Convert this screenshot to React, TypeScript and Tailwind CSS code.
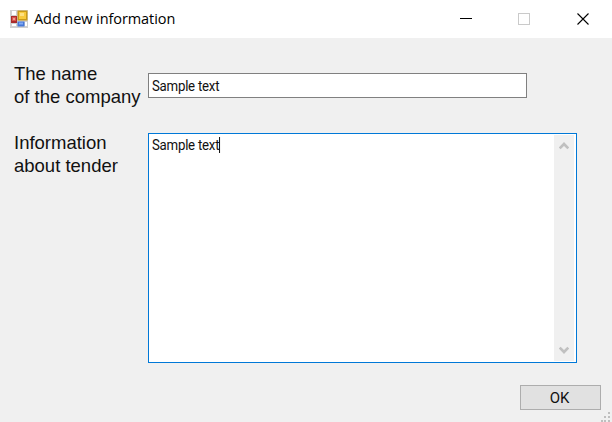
import React from "react";

function FormIcon() {
  return (
    <svg width="18" height="18" viewBox="0 0 18 18" className="block shrink-0">
      <rect width="18" height="18" fill="#d0d0d0" />
      <path d="M2 1h4v4H2zM2 14h4v2H2zM15 12h2v4h-2z" fill="#fff" />
      <rect x="1" y="6" width="6" height="7" fill="#a92b2b" />
      <rect x="2" y="7" width="4" height="4" fill="#d9534a" />
      <rect x="3" y="8" width="2" height="2" fill="#ec9a8e" />
      <rect x="7.5" y="0.5" width="10" height="10" fill="#c99a18" />
      <rect x="9" y="2" width="7" height="7" fill="#f8ca3c" />
      <rect x="10" y="3" width="4" height="3" fill="#fde184" />
      <rect x="7.5" y="11.5" width="7" height="5" fill="#4678d8" />
      <rect x="9" y="12.5" width="4" height="2" fill="#82aaf4" />
    </svg>
  );
}

function Chevron({ down = false }: { down?: boolean }) {
  return (
    <svg width="10" height="9" viewBox="0 0 10 9" className="block">
      <path
        d={down ? "M0.7 1.6L5 6L9.3 1.6" : "M0.7 7.4L5 3L9.3 7.4"}
        fill="none"
        stroke="#c0c0c0"
        strokeWidth="2.7"
      />
    </svg>
  );
}

function TitleBar() {
  return (
    <header className="flex h-[38px] items-center bg-white pl-[10px]">
      <FormIcon />
      <h1 className="ml-[6px] whitespace-nowrap font-['Open_Sans',sans-serif] text-[14.5px] leading-[20px] tracking-[-0.08px] text-black">
        Add new information
      </h1>
      <div className="ml-auto flex items-center pr-[22px]">
        <svg width="131" height="14" viewBox="0 0 131 14" className="block" shapeRendering="crispEdges">
          <rect x="1" y="6" width="12" height="1" fill="#000" />
          <rect x="59.5" y="1.5" width="11" height="11" fill="none" stroke="#cacaca" />
          <path
            d="M118.5 1.5L129.5 12.5M129.5 1.5L118.5 12.5"
            stroke="#000"
            strokeWidth="1.1"
            shapeRendering="auto"
          />
        </svg>
      </div>
    </header>
  );
}

function Label({ lines }: { lines: string[] }) {
  return (
    <div className="w-[134px] shrink-0 whitespace-nowrap text-[18.5px] leading-[23px] text-[#111]">
      {lines.map((line) => (
        <div key={line}>{line}</div>
      ))}
    </div>
  );
}

function FieldText({ caret = false }: { caret?: boolean }) {
  return (
    <span className="flex origin-left scale-x-[0.945] whitespace-nowrap font-['Roboto',sans-serif] text-[14px] leading-[17px] tracking-[-0.25px] text-[#111]">
      Sample text
      {caret && <span className="h-[16px] w-px bg-black" />}
    </span>
  );
}

export default function App() {
  return (
    <main className="flex h-[422px] w-[612px] flex-col overflow-hidden bg-[#f0f0f0] font-['Liberation_Sans',Arial,sans-serif]">
      <TitleBar />
      <section className="flex pl-[14px] pt-[24px]">
        <Label lines={["The name", "of the company"]} />
        <div className="mt-[11px] flex h-[25px] w-[379px] items-center border border-[#808080] bg-white pl-[3px] pt-px">
          <FieldText />
        </div>
      </section>
      <section className="flex pl-[14px] pt-[23px]">
        <Label lines={["Information", "about tender"]} />
        <div className="mt-[2px] flex h-[230px] w-[429px] border border-[#0078d7] bg-white">
          <div className="flex flex-1 items-start pl-[3px] pt-[3px]">
            <FieldText caret />
          </div>
          <div className="my-px mr-[2px] flex w-[20px] flex-col items-center justify-between bg-[#f0f0f0] py-[6px] pr-px">
            <Chevron />
            <Chevron down />
          </div>
        </div>
      </section>
      <footer className="flex flex-1 items-start justify-end pt-[22px]">
        <button className="flex h-[25px] w-[81px] items-center justify-center border border-[#adadad] bg-[#e1e1e1] pr-[2px] pt-px font-['Roboto',sans-serif] text-[15px] leading-none text-[#111]">
          OK
        </button>
        <svg width="11" height="37" viewBox="0 0 11 37" className="block" shapeRendering="crispEdges">
          <g fill="#bfbfbf">
            <rect x="7" y="27" width="2" height="2" />
            <rect x="3" y="31" width="2" height="2" />
            <rect x="7" y="31" width="2" height="2" />
            <rect x="0" y="35" width="2" height="2" />
            <rect x="3" y="35" width="2" height="2" />
            <rect x="7" y="35" width="2" height="2" />
          </g>
        </svg>
      </footer>
    </main>
  );
}
